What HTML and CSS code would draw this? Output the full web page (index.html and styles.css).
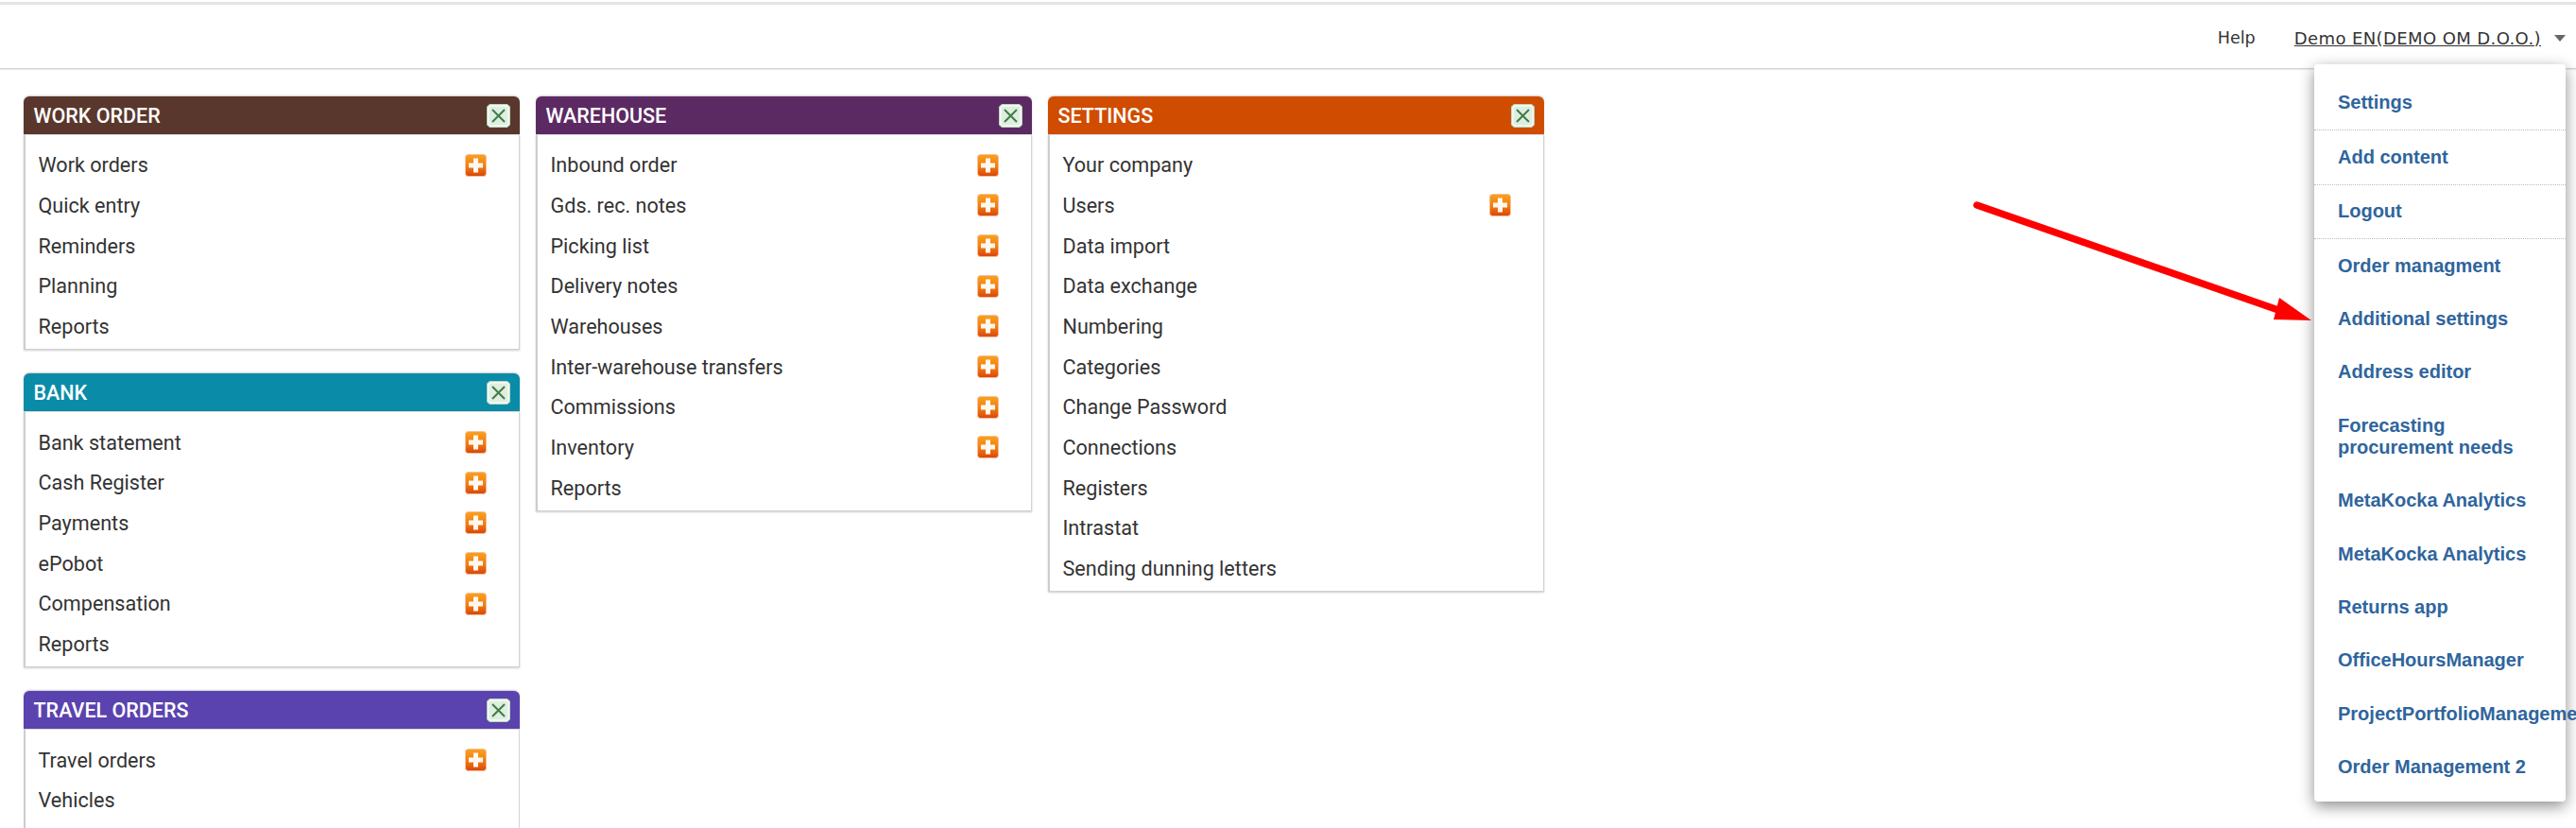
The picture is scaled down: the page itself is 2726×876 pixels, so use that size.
FILE: index.html
```html
<!DOCTYPE html>
<html lang="en">
<head>
<meta charset="utf-8">
<title>Dashboard</title>
<link rel="stylesheet" href="styles.css">
</head>
<body>
<svg class="defs" width="0" height="0" aria-hidden="true">
  <defs>
    <linearGradient id="plusfill" x1="0" y1="0" x2="0" y2="1">
      <stop offset="0" stop-color="#f9a21f"/>
      <stop offset="0.55" stop-color="#f27c10"/>
      <stop offset="1" stop-color="#d8450c"/>
    </linearGradient>
    <symbol id="plus" viewBox="0 0 23 24">
      <rect x="0.5" y="0.5" width="22" height="23" rx="3" fill="url(#plusfill)" stroke="#f6c09a"/>
      <path d="M9 4.500h5V9.500h5v5h-5V19.500H9v-5H4v-5h5z" fill="#fff8f0"/>
    </symbol>
    <symbol id="close" viewBox="0 0 25 25">
      <path d="M3 .5h19L24.500 3v19L22 24.500H3L.5 22V3z" fill="#e5f1e5" stroke="#b9d8ba"/>
      <rect x="2" y="2" width="21" height="21" rx="2" fill="#dfeee0" stroke="#fff"/>
      <path d="M6 6l13 13M19 6L6 19" stroke="#3f7d46" stroke-width="2" fill="none"/>
    </symbol>
  </defs>
</svg>
<header class="topbar">
  <a class="help">Help</a>
  <a class="account">Demo EN(DEMO OM D.O.O.)</a>
  <span class="caret"></span>
</header>
<main class="board">
  <div class="column">
    <section class="card">
      <h2 class="card-title brown">WORK ORDER<svg class="close"><use href="#close"/></svg></h2>
      <ul class="rows">
        <li class="row">Work orders<svg class="plus"><use href="#plus"/></svg></li>
        <li class="row">Quick entry</li>
        <li class="row">Reminders</li>
        <li class="row">Planning</li>
        <li class="row">Reports</li>
      </ul>
    </section>
    <section class="card">
      <h2 class="card-title teal">BANK<svg class="close"><use href="#close"/></svg></h2>
      <ul class="rows">
        <li class="row">Bank statement<svg class="plus"><use href="#plus"/></svg></li>
        <li class="row">Cash Register<svg class="plus"><use href="#plus"/></svg></li>
        <li class="row">Payments<svg class="plus"><use href="#plus"/></svg></li>
        <li class="row">ePobot<svg class="plus"><use href="#plus"/></svg></li>
        <li class="row">Compensation<svg class="plus"><use href="#plus"/></svg></li>
        <li class="row">Reports</li>
      </ul>
    </section>
    <section class="card">
      <h2 class="card-title violet">TRAVEL ORDERS<svg class="close"><use href="#close"/></svg></h2>
      <ul class="rows rows-open">
        <li class="row">Travel orders<svg class="plus"><use href="#plus"/></svg></li>
        <li class="row">Vehicles</li>
      </ul>
    </section>
  </div>
  <div class="column">
    <section class="card">
      <h2 class="card-title purple">WAREHOUSE<svg class="close"><use href="#close"/></svg></h2>
      <ul class="rows">
        <li class="row">Inbound order<svg class="plus"><use href="#plus"/></svg></li>
        <li class="row">Gds. rec. notes<svg class="plus"><use href="#plus"/></svg></li>
        <li class="row">Picking list<svg class="plus"><use href="#plus"/></svg></li>
        <li class="row">Delivery notes<svg class="plus"><use href="#plus"/></svg></li>
        <li class="row">Warehouses<svg class="plus"><use href="#plus"/></svg></li>
        <li class="row">Inter-warehouse transfers<svg class="plus"><use href="#plus"/></svg></li>
        <li class="row">Commissions<svg class="plus"><use href="#plus"/></svg></li>
        <li class="row">Inventory<svg class="plus"><use href="#plus"/></svg></li>
        <li class="row">Reports</li>
      </ul>
    </section>
  </div>
  <div class="column">
    <section class="card">
      <h2 class="card-title orange">SETTINGS<svg class="close"><use href="#close"/></svg></h2>
      <ul class="rows">
        <li class="row">Your company</li>
        <li class="row">Users<svg class="plus"><use href="#plus"/></svg></li>
        <li class="row">Data import</li>
        <li class="row">Data exchange</li>
        <li class="row">Numbering</li>
        <li class="row">Categories</li>
        <li class="row">Change Password</li>
        <li class="row">Connections</li>
        <li class="row">Registers</li>
        <li class="row">Intrastat</li>
        <li class="row">Sending dunning letters</li>
      </ul>
    </section>
  </div>
</main>
<nav class="menu">
  <a class="menu-item ruled">Settings</a>
  <a class="menu-item ruled">Add content</a>
  <a class="menu-item ruled">Logout</a>
  <a class="menu-item">Order managment</a>
  <a class="menu-item">Additional settings</a>
  <a class="menu-item">Address editor</a>
  <a class="menu-item">Forecasting procurement needs</a>
  <a class="menu-item">MetaKocka Analytics</a>
  <a class="menu-item">MetaKocka Analytics</a>
  <a class="menu-item">Returns app</a>
  <a class="menu-item">OfficeHoursManager</a>
  <a class="menu-item">ProjectPortfolioManagement</a>
  <a class="menu-item">Order Management 2</a>
</nav>
<svg class="arrow" width="370" height="135" viewBox="0 0 370 135" aria-hidden="true">
  <path d="M6 6L325 117" stroke="#ff0000" stroke-width="7.5" stroke-linecap="round" fill="none"/>
  <path d="M326 104L320 127L360 128z" fill="#ff0000"/>
</svg>
</body>
</html>
```
FILE: styles.css
```css
html, body {
  margin: 0;
  padding: 0;
  height: 876px;
  overflow: hidden;
  background: #fff;
}
body {
  position: relative;
  font-family: Roboto, "Liberation Sans", sans-serif;
  color: #333;
}
.defs {
  position: absolute;
}
.topbar {
  box-sizing: border-box;
  height: 71px;
  margin-top: 2px;
  border-top: 3px solid #e3e5e0;
  border-bottom: 1px solid #d4d4d4;
  box-shadow: 0 1px 1px rgba(0, 0, 0, 0.08);
  display: flex;
  justify-content: flex-end;
  align-items: center;
  padding: 3px 11px 0 0;
  font-family: "DejaVu Sans", sans-serif;
  font-size: 18px;
  color: #333;
}
.help {
  margin-right: 41px;
  font-size: 17.5px;
}
.account {
  text-decoration: underline;
  letter-spacing: 0.4px;
  margin-right: 14px;
}
.caret {
  width: 0;
  height: 0;
  border-left: 6px solid transparent;
  border-right: 6px solid transparent;
  border-top: 7px solid #666;
}
.board {
  display: flex;
  align-items: flex-start;
  gap: 17px;
  padding: 29px 0 0 25px;
}
.column {
  width: 525px;
  display: flex;
  flex-direction: column;
  gap: 25px;
}
.card {
  background: #fff;
  border-radius: 6px 6px 0 0;
}
.card-title {
  margin: 0;
  height: 40px;
  box-sizing: border-box;
  padding: 0 10px 0 10.5px;
  display: flex;
  justify-content: space-between;
  align-items: center;
  border-radius: 6px 6px 0 0;
  box-shadow: 0 -1px 2px rgba(0, 0, 0, 0.2);
  color: #fff;
  font-size: 21.5px;
  font-weight: 500;
}
.brown { background: #5a372c; }
.teal { background: #0a8ca8; }
.violet { background: #5a43ae; }
.purple { background: #5c2a63; }
.orange { background: #d04c00; }
.close {
  width: 25px;
  height: 25px;
}
.rows {
  list-style: none;
  margin: 0;
  padding: 10.5px 0 2.5px;
  border-top: 1px solid #dcdcdc;
  border-left: 2px solid #cdcdcd;
  border-right: 1px solid #d4d4d4;
  border-bottom: 1px solid #d0d0d0;
  box-shadow: 0 1px 2px rgba(0, 0, 0, 0.2);
}
.rows-open {
  padding-bottom: 8px;
  border-bottom: 0;
  box-shadow: none;
}
.row {
  height: 42.67px;
  display: flex;
  justify-content: space-between;
  align-items: center;
  padding: 0 34px 0 13.5px;
  font-size: 21.6px;
  color: #333;
}
.plus {
  width: 23px;
  height: 24px;
}
.menu {
  position: absolute;
  left: 2449px;
  top: 68px;
  width: 266px;
  height: 780px;
  box-sizing: border-box;
  padding: 12.5px 0 0;
  background: #fff;
  border-radius: 4px;
  box-shadow: 0 5px 16px rgba(0, 0, 0, 0.45);
  font-family: "Liberation Sans", Arial, sans-serif;
  font-size: 20px;
  font-weight: 700;
  color: #2f659d;
  line-height: 23px;
}
.menu::before {
  content: "";
  position: absolute;
  left: 169px;
  top: -9px;
  width: 18px;
  height: 18px;
  background: #fff;
  transform: rotate(45deg);
  box-shadow: -1px -1px 2px rgba(0, 0, 0, 0.3);
  z-index: -1;
}
.menu-item {
  display: block;
  padding: 16.7px 0 16.7px 25px;
  width: 212px;
}
.ruled {
  width: auto;
  padding-top: 16.75px;
  padding-bottom: 16.75px;
  border-bottom: 1px dotted #bbb;
}
.arrow {
  position: absolute;
  left: 2086px;
  top: 211px;
}
```
